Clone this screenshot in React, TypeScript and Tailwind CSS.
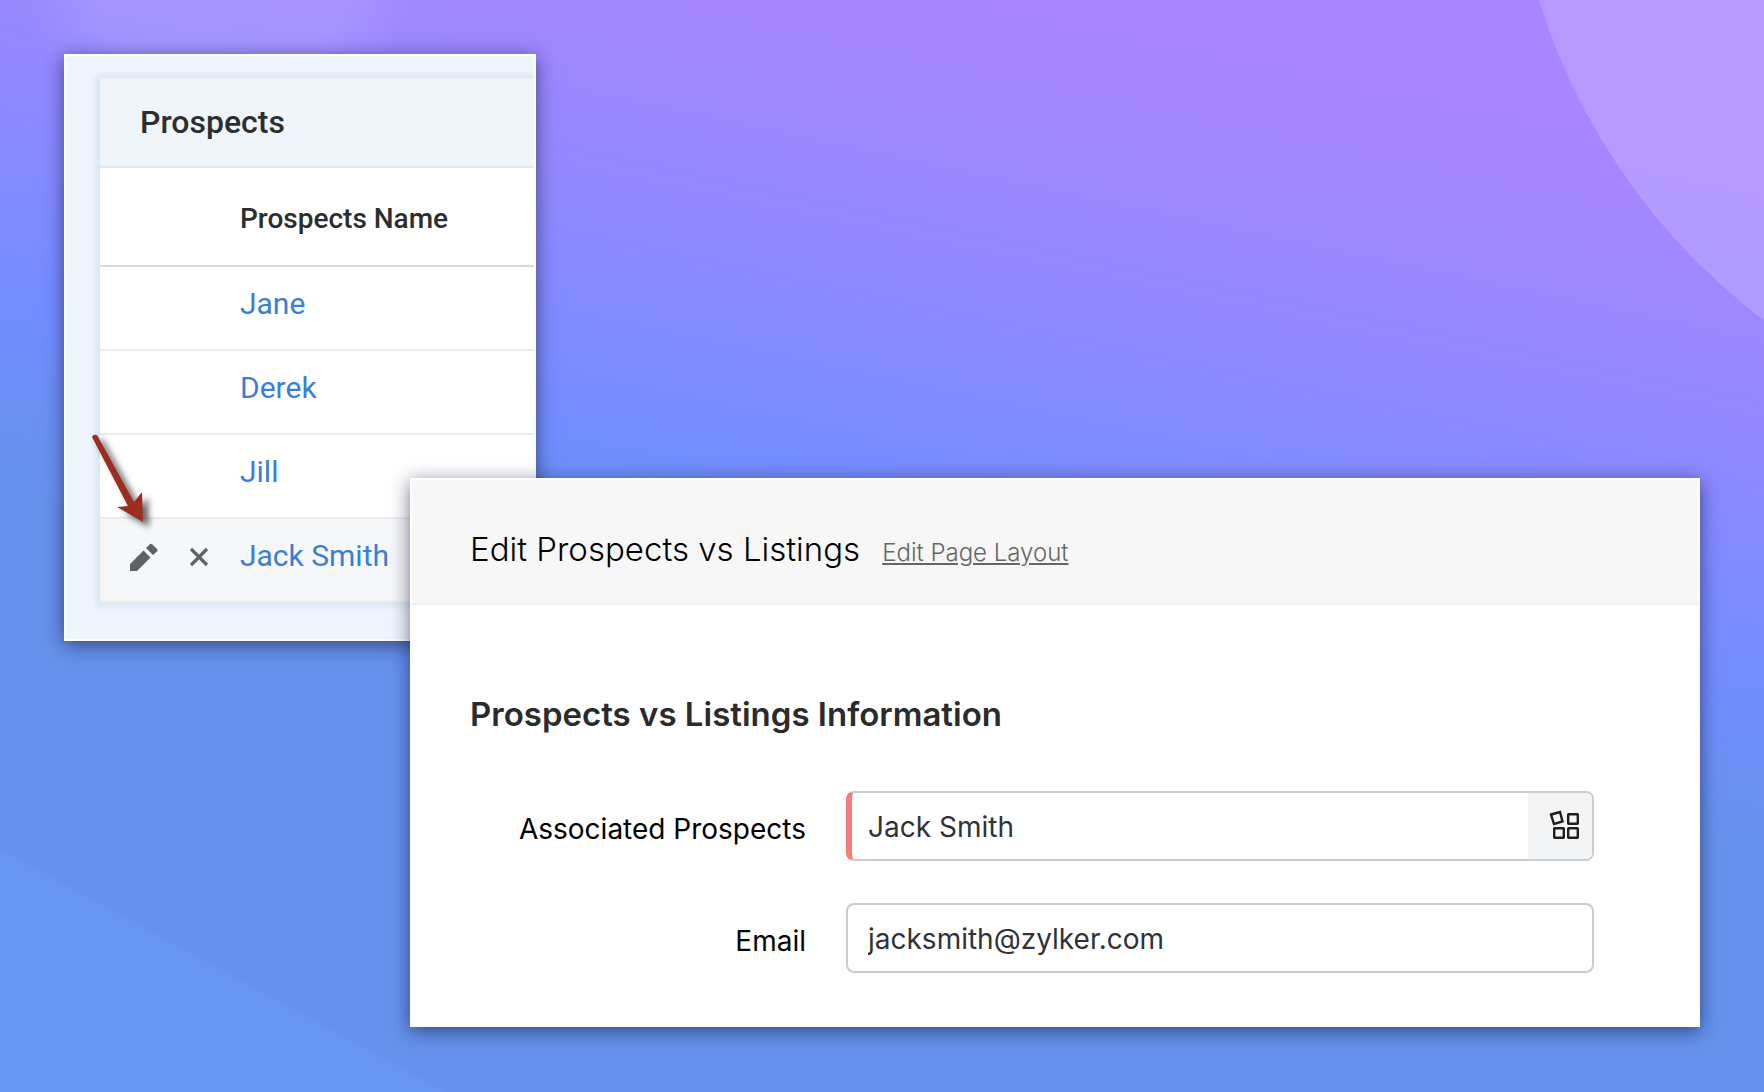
import React from "react";

const rows = ["Jane", "Derek", "Jill", "Jack Smith"];

function Backdrop(): React.ReactElement {
  return (
    <svg className="absolute inset-0 h-full w-full" viewBox="0 0 1764 1092" preserveAspectRatio="none" aria-hidden="true">
      <defs>
        <radialGradient id="blob">
          <stop offset="0" stopColor="#fff" stopOpacity="0.11" />
          <stop offset="0.65" stopColor="#fff" stopOpacity="0.1" />
          <stop offset="1" stopColor="#fff" stopOpacity="0" />
        </radialGradient>
      </defs>
      <circle cx="2150" cy="-190" r="640" fill="#fff" fillOpacity="0.17" />
      <circle cx="220" cy="-40" r="200" fill="url(#blob)" />
      <path d="M0 849L446 1092H0Z" fill="#6c9aff" fillOpacity="0.4" />
    </svg>
  );
}

function PencilIcon(): React.ReactElement {
  return (
    <svg className="h-7 w-7" viewBox="0 0 28 28" fill="#5f6163" aria-hidden="true">
      <path d="M0 28v-7L13.500 7.500l7 7L7 28zM16 5l3.500-3.500a2 2 0 0 1 3 0L27 6a2 2 0 0 1 0 2.500L23 12z" />
    </svg>
  );
}

function CrossIcon(): React.ReactElement {
  return (
    <svg className="h-5 w-5" viewBox="0 0 20 20" fill="none" stroke="#5f6163" strokeWidth="3.2" aria-hidden="true">
      <path d="M1 2l16 16M17 2L1 18" />
    </svg>
  );
}

function LookupIcon(): React.ReactElement {
  return (
    <svg className="h-8 w-8" viewBox="0 0 32 32" fill="none" stroke="#1d1d1d" strokeWidth="2.4" aria-hidden="true">
      <path d="M3 4.500L12 2L14.500 11.500L6 14Z" />
      <rect x="20.200" y="4.200" width="9.600" height="9.600" rx="0.500" />
      <rect x="6.200" y="18.200" width="9.600" height="9.600" rx="0.500" />
      <rect x="20.200" y="18.200" width="9.600" height="9.600" rx="0.500" />
    </svg>
  );
}

function Arrow(): React.ReactElement {
  return (
    <svg
      className="pointer-events-none absolute top-[378px] left-[26px] h-[96px] w-[64px] drop-shadow-[6px_5px_3px_rgba(0,0,0,0.6)]"
      viewBox="0 0 64 96"
      fill="#9c2c1f"
      aria-hidden="true"
    >
      <path d="M0 3Q1 0 5 1L42 68L50 58L51 88L25 73L36 72Z" />
    </svg>
  );
}

function ProspectsCard(): React.ReactElement {
  return (
    <section className="relative w-[472px] border-2 border-white bg-[#eff5fd] pt-[22px] pb-9 pl-[34px] font-[Roboto,sans-serif] shadow-[0_4px_18px_rgba(20,20,60,0.6)]">
      <div className="bg-white shadow-[-1px_0_6px_3px_#d5e6f3] [clip-path:inset(-12px_0_-12px_-12px)]">
        <h2 className="border-b-2 border-[#dce8f3] bg-[#f0f5fa] px-10 py-6 text-[32px] leading-10 font-medium text-[#2b2e30]">Prospects</h2>
        <table className="w-full table-fixed text-left">
          <thead>
            <tr className="h-[98px] border-b-2 border-[#d3d9de] text-[28px] text-[#2b2e30]">
              <th className="w-[140px]" aria-label="Actions" />
              <th className="pt-1 font-medium">Prospects Name</th>
            </tr>
          </thead>
          <tbody className="text-[30px] text-[#3a7fd5]">
            {rows.map((name) => (
              <tr key={name} className="h-[84px] border-b-2 border-[#e9edf0] last:bg-[#f6f7f9]">
                <td className="pb-1.5 pl-[30px]">
                  {name === "Jack Smith" ? (
                    <div className="flex items-center gap-8">
                      <button type="button" aria-label="Edit">
                        <PencilIcon />
                      </button>
                      <button type="button" aria-label="Remove">
                        <CrossIcon />
                      </button>
                    </div>
                  ) : null}
                </td>
                <td className="pb-2.5">
                  <a href="#prospect">{name}</a>
                </td>
              </tr>
            ))}
          </tbody>
        </table>
      </div>
      <Arrow />
    </section>
  );
}

function EditCard(): React.ReactElement {
  return (
    <section className="absolute top-[478px] right-16 left-[410px] border-2 border-white bg-white pb-[52px] font-[Inter,sans-serif] text-[28px] text-black shadow-[0_4px_18px_rgba(20,20,60,0.6)]">
      <header className="flex h-[125px] items-center border-b-2 border-[#efefef] bg-[#f7f7f7] px-[58px] pt-[18px]">
        <div className="flex items-baseline gap-[22px] leading-[42px]">
          <h1 className="text-[33px] font-light">Edit Prospects vs Listings</h1>
          <a href="#layout" className="text-[24px] font-light text-[#666] underline">
            Edit Page Layout
          </a>
        </div>
      </header>
      <form className="pr-[104px] pl-[58px]" onSubmit={(e) => e.preventDefault()}>
        <h2 className="pt-[88px] text-[33px] leading-[42px] font-semibold text-[#2b2b2b]">Prospects vs Listings Information</h2>
        <div className="mt-14 grid grid-cols-[336px_1fr] items-center gap-x-10 gap-y-[42px]">
          <label className="pt-1.5 text-right" htmlFor="prospect">
            Associated Prospects
          </label>
          <div className="flex h-[70px] overflow-hidden rounded-lg border-2 border-l-[6px] border-[#c9cdd1] border-l-[#f27d7b]">
            <input id="prospect" className="min-w-0 flex-1 px-4 pt-0.5 text-[#2f3338] outline-none" defaultValue="Jack Smith" />
            <button type="button" aria-label="Look up" className="flex w-16 items-center justify-center bg-[#f2f4f6] pl-2">
              <LookupIcon />
            </button>
          </div>
          <label className="pt-1.5 text-right" htmlFor="email">
            Email
          </label>
          <input
            id="email"
            type="email"
            className="h-[70px] min-w-0 rounded-lg border-2 border-[#c9cdd1] px-5 pt-0.5 text-[#2f3338] outline-none"
            defaultValue="jacksmith@zylker.com"
          />
        </div>
      </form>
    </section>
  );
}

export default function App(): React.ReactElement {
  return (
    <main className="relative min-h-screen overflow-hidden bg-[linear-gradient(192deg,#a986ff_0%,#a986ff_10%,#a087ff_20%,#8e89ff_32%,#738dff_46%,#6592ec_59%,#6592ec_100%)] px-16 pt-[54px]">
      <Backdrop />
      <ProspectsCard />
      <EditCard />
    </main>
  );
}
